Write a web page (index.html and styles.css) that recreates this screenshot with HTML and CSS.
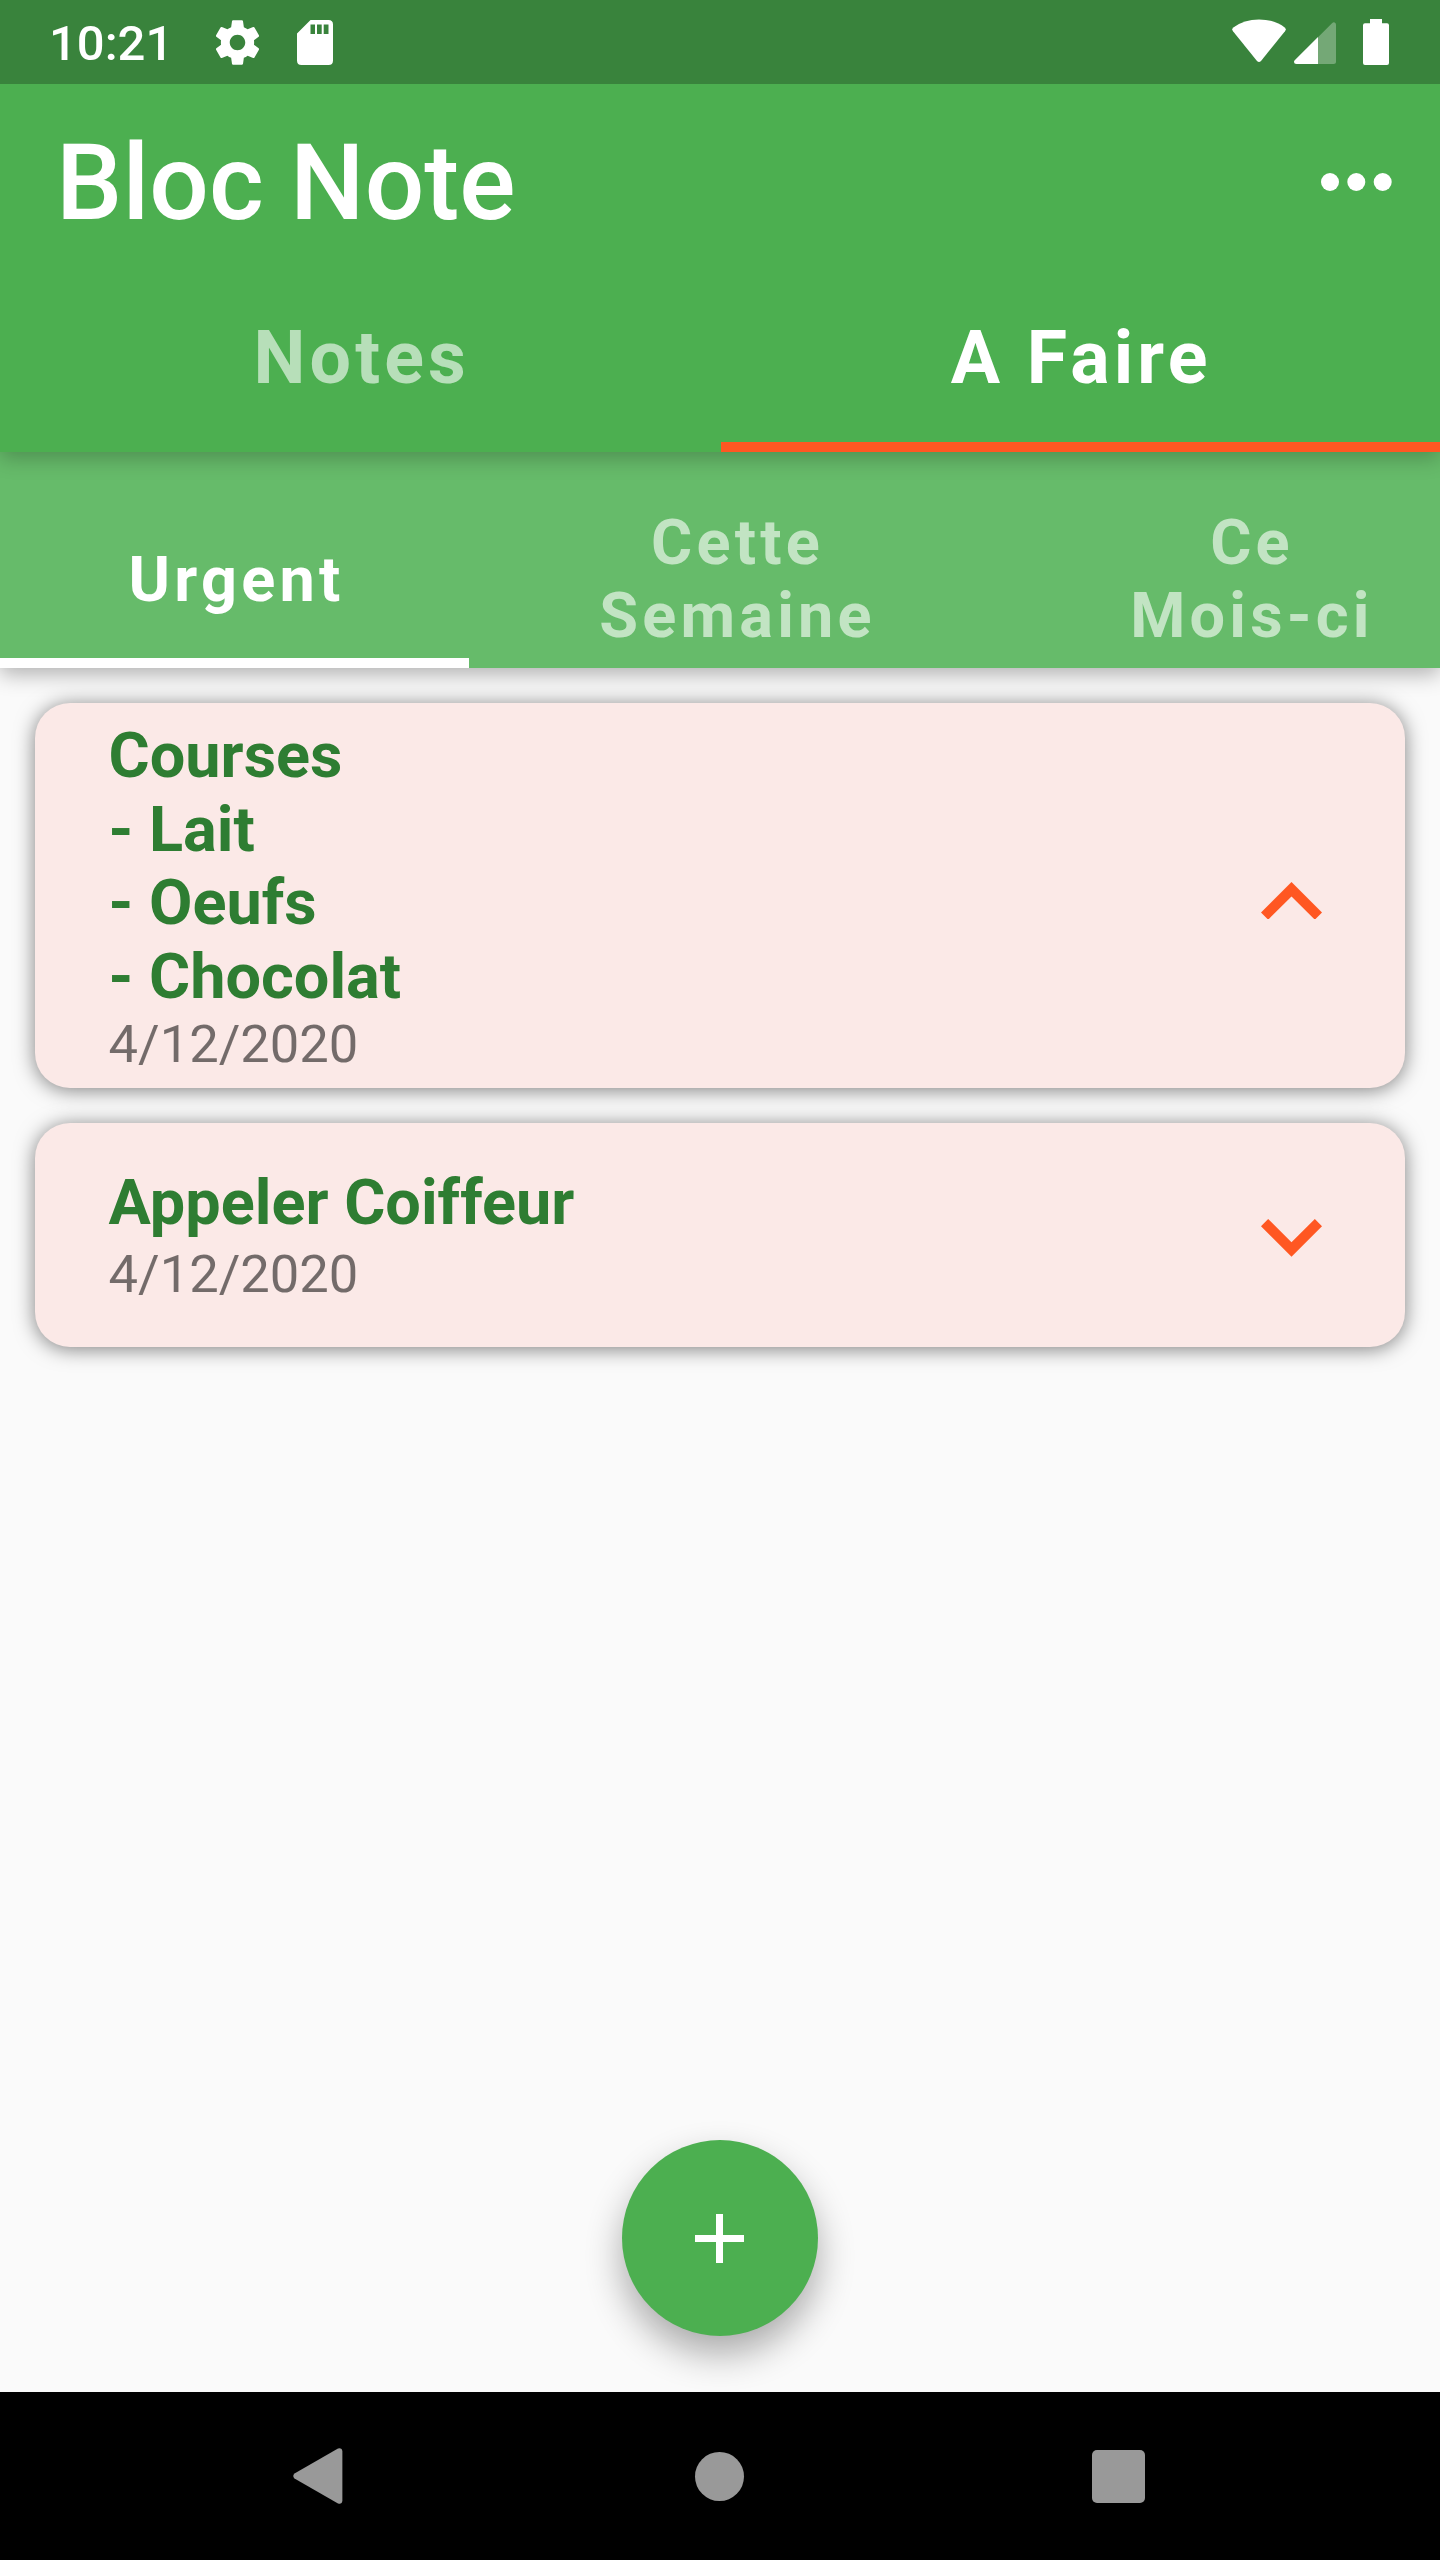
FILE: index.html
```
<!DOCTYPE html>
<html lang="fr">
<head>
<meta charset="utf-8">
<title>Bloc Note</title>
<link rel="stylesheet" href="styles.css">
</head>
<body>
<div class="screen">
  <header class="app-bar">
    <div class="status-bar">
      <span class="clock">10:21</span>
      <svg class="gear" viewBox="2.3 2 19.4 20"><path fill="#fff" d="M19.43 12.98c.04-.32.07-.64.07-.98s-.03-.66-.07-.98l2.11-1.65c.19-.15.24-.42.12-.64l-2-3.46c-.12-.22-.39-.3-.61-.22l-2.49 1c-.52-.4-1.08-.73-1.69-.98l-.38-2.65C14.46 2.18 14.25 2 14 2h-4c-.25 0-.46.18-.49.42l-.38 2.65c-.61.25-1.17.59-1.69.98l-2.49-1c-.23-.09-.49 0-.61.22l-2 3.46c-.13.22-.07.49.12.64l2.11 1.65c-.04.32-.07.65-.07.98s.03.66.07.98l-2.11 1.65c-.19.15-.24.42-.12.64l2 3.46c.12.22.39.3.61.22l2.49-1c.52.4 1.08.73 1.69.98l.38 2.65c.03.24.24.42.49.42h4c.25 0 .46-.18.49-.42l.38-2.65c.61-.25 1.17-.59 1.69-.98l2.49 1c.23.09.49 0 .61-.22l2-3.46c.12-.22.07-.49-.12-.64l-2.11-1.65zM12 15.5c-1.93 0-3.5-1.57-3.5-3.5s1.57-3.5 3.5-3.5 3.5 1.57 3.5 3.5-1.57 3.5-3.5 3.5z"/></svg>
      <svg class="sd" viewBox="0 0 36 45"><path fill="#fff" fill-rule="evenodd" d="M13.500 0H31.500Q36 0 36 4.500V40.500Q36 45 31.500 45H4.500Q0 45 0 40.500V13.500ZM13.500 4.500V14H18V4.500ZM20 4.500V14H24.700V4.500ZM26.700 4.500V14H31.500V4.500Z"/></svg>
      <svg class="wifi" viewBox="0 0 54 44"><path fill="#fff" d="M1.300 8.400Q12 .4 27 .4T52.700 8.400Q54.600 10 53 12.200L29 42Q27 44 25 42L1 12.200Q-.6 10 1.300 8.400Z"/></svg>
      <svg class="signal" viewBox="0 0 42 42"><path fill="#fff" fill-opacity=".3" d="M24 15.300 38 1.200Q39.300 0 40.600.4T42 2.500V39.500Q42 42 39.500 42H24Z"/><path fill="#fff" d="M24 15V42H2.500Q0 42 0 39.500 0 38.800 1.200 37.700Z"/></svg>
      <svg class="battery" viewBox="0 0 26 46"><path fill="#fff" d="M7 0H19V4.300H24Q26 4.300 26 6.300V44Q26 46 24 46H2Q0 46 0 44V6.300Q0 4.300 2 4.300H7Z"/></svg>
    </div>
    <div class="title-row">
      <h1 class="title">Bloc Note</h1>
      <svg class="more" viewBox="0 0 71 18"><g fill="#fff"><circle cx="9" cy="9" r="9"/><circle cx="35.300" cy="9" r="9"/><circle cx="61.700" cy="9" r="9"/></g></svg>
    </div>
    <nav class="tabs main-tabs">
      <div class="tab">Notes</div>
      <div class="tab active">A Faire</div>
    </nav>
  </header>
  <nav class="tabs sub-tabs">
    <div class="tab active">Urgent</div>
    <div class="tab">Cette<br>Semaine</div>
    <div class="tab">Ce<br>Mois-ci</div>
  </nav>
  <main class="list">
    <article class="card open">
      <div class="card-text">
        <h2 class="card-title">Courses<br>- Lait<br>- Oeufs<br>- Chocolat</h2>
        <p class="date">4/12/2020</p>
      </div>
      <svg class="chevron" viewBox="6 8 12 7.410"><path fill="#ff5722" d="M12 8l-6 6 1.410 1.410L12 10.830l4.590 4.580L18 14z"/></svg>
    </article>
    <article class="card">
      <div class="card-text">
        <h2 class="card-title">Appeler Coiffeur</h2>
        <p class="date">4/12/2020</p>
      </div>
      <svg class="chevron" viewBox="6 8.590 12 7.410"><path fill="#ff5722" d="M16.590 8.590L12 13.170 7.410 8.590 6 10l6 6 6-6z"/></svg>
    </article>
  </main>
  <div class="fab-row">
    <div class="fab"><svg class="plus" viewBox="5 5 14 14"><path fill="#fff" d="M19 13h-6v6h-2v-6H5v-2h6V5h2v6h6v2z"/></svg></div>
  </div>
  <footer class="nav-bar">
    <svg class="back" viewBox="0 0 50 56"><path fill="#999" d="M1.500 25.500 45 .6Q49 -.8 49.400 3V53Q49 56.800 45 55.400L1.500 30.500Q-1 28 1.500 25.500Z"/></svg>
    <div class="home"></div>
    <div class="recents"></div>
  </footer>
</div>
</body>
</html>
```
FILE: styles.css
```
* { box-sizing: border-box; }
body { margin: 0; font-family: Roboto, "Liberation Sans", sans-serif; color: #fff; }
h1, h2, p { margin: 0; }
svg { display: block; flex: none; }

.screen { width: 1440px; height: 2560px; display: flex; flex-direction: column; background: #fafafa; overflow: hidden; }

.app-bar { position: relative; z-index: 2; height: 451.600px; background: #4caf50; display: flex; flex-direction: column; box-shadow: 0 6px 20px rgba(0,0,0,.24); }
.status-bar { height: 84px; background: #39833c; display: flex; align-items: flex-start; padding: 0 51px 0 49px; }
.clock { width: 167px; font-size: 49px; font-weight: 500; line-height: 58px; padding-top: 15px; }
.gear { width: 43px; height: 45px; margin-top: 20px; }
.sd { width: 36px; height: 45px; margin: 20px 0 0 37.500px; }
.wifi { width: 54px; height: 44px; margin: 19px 0 0 auto; }
.signal { width: 42px; height: 42px; margin: 22px 0 0 8px; }
.battery { width: 26px; height: 46px; margin: 19px 0 0 27px; }

.title-row { height: 196px; display: flex; align-items: center; justify-content: space-between; padding: 0 48.500px 0 56px; }
.title { font-size: 105px; font-weight: 500; line-height: 123px; padding-top: 2px; letter-spacing: .1px; }
.more { width: 71px; height: 18px; }

.tabs { display: flex; font-weight: 700; text-align: center; }
.tab { display: flex; align-items: center; justify-content: center; color: rgba(255,255,255,.6); }
.tab.active { color: #fff; }
.main-tabs { flex: 1; font-size: 73.500px; letter-spacing: 4.200px; line-height: 86px; }
.main-tabs .tab { flex: 1; padding: 0 0 6px 3px; border-bottom: 10px solid transparent; }
.main-tabs .active { padding-left: 2px; border-bottom-color: #ff5722; }

.sub-tabs { position: relative; z-index: 1; height: 216.700px; background: #66bb6a; font-size: 63px; letter-spacing: 4.200px; line-height: 73.500px; box-shadow: 0 6px 20px rgba(0,0,0,.3); }
.sub-tabs .tab { flex: none; width: 492px; padding-top: 49px; border-bottom: 10px solid transparent; }
.sub-tabs .tab:first-child { width: 469px; padding-left: 4px; }
.sub-tabs .tab:nth-child(2) { width: 537px; }
.sub-tabs .active { border-bottom-color: #fff; }

.list { flex: 1; display: flex; flex-direction: column; gap: 35px; padding: 35.200px 35px 0; }
.card { height: 224px; display: flex; align-items: center; justify-content: space-between; padding: 0 83.500px 0 73.500px; background: #fbe9e7; border-radius: 35px; box-shadow: 0 2px 20px rgba(0,0,0,.5); }
.card.open { height: 385px; }
.card-text { display: flex; flex-direction: column; gap: 3.500px; }
.card-title { font-size: 63px; font-weight: 700; line-height: 73.800px; color: #2e7d32; }
.open .card-text { gap: 0; padding-top: 1.500px; }
.open .card-title { line-height: 73.700px; }
.date { font-size: 52.500px; line-height: 61px; color: rgba(0,0,0,.54); }
.chevron { width: 61px; height: 37.700px; margin-top: 5.500px; }
.open .chevron { margin-top: 9px; }

.fab-row { height: 252px; display: flex; justify-content: center; }
.fab { width: 196px; height: 196px; border-radius: 50%; background: #4caf50; display: flex; align-items: center; justify-content: center; box-shadow: 0 18px 36px rgba(0,0,0,.32); }
.plus { width: 49px; height: 49px; margin: 1px 1px 0 0; }

.nav-bar { height: 168px; background: #000; display: flex; align-items: center; padding: 0 295.500px 0 293px; }
.back { width: 50px; height: 56px; }
.home { width: 49px; height: 49px; margin: 0 auto 0 352px; border-radius: 50%; background: #999; }
.recents { width: 53px; height: 53px; border-radius: 5px; background: #999; }
```
